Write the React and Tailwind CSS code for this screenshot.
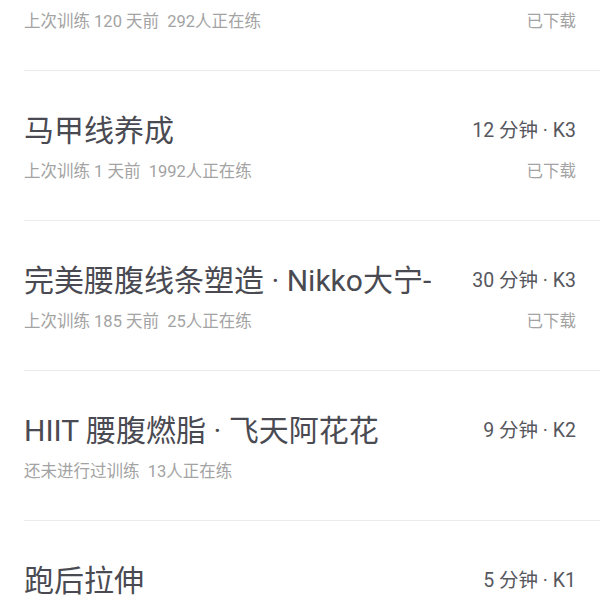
const rows = [
  { title: "腹肌撕裂者", dur: "8 分钟 · K2", sub: "上次训练 120 天前  292人正在练", dl: true },
  { title: "马甲线养成", dur: "12 分钟 · K3", sub: "上次训练 1 天前  1992人正在练", dl: true },
  { title: "完美腰腹线条塑造 · Nikko大宁-", dur: "30 分钟 · K3", sub: "上次训练 185 天前  25人正在练", dl: true },
  { title: "HIIT 腰腹燃脂 · 飞天阿花花", dur: "9 分钟 · K2", sub: "还未进行过训练  13人正在练", dl: false },
  { title: "跑后拉伸", dur: "5 分钟 · K1", sub: "上次训练 30 天前  88人正在练", dl: true },
];

export default function App() {
  return (
    <div
      className="w-[600px] h-[600px] overflow-hidden bg-white"
      style={{ fontFamily: "Roboto, 'Noto Sans CJK SC', sans-serif" }}
    >
      <div className="-mt-[79px] pl-6">
        {rows.map((r, i) => (
          <div key={i} className="border-b border-[#ececec] pr-6 pt-[40px] pb-[37px] flex flex-col gap-[10px]">
            <div className="flex items-center justify-between h-[40px]">
              <div className="text-[30px] leading-[40px] text-[#4a4a52] whitespace-nowrap overflow-hidden">{r.title}</div>
              <div className="text-[19.5px] leading-[40px] text-[#57575e] whitespace-nowrap shrink-0 ml-4">{r.dur}</div>
            </div>
            <div className="flex items-center justify-between h-[22px]">
              <div className="text-[16.5px] leading-[22px] text-[#a3a3a3] whitespace-pre">{r.sub}</div>
              <div className="text-[16.5px] leading-[22px] text-[#a3a3a3]">{r.dl ? "已下载" : ""}</div>
            </div>
          </div>
        ))}
      </div>
    </div>
  );
}
